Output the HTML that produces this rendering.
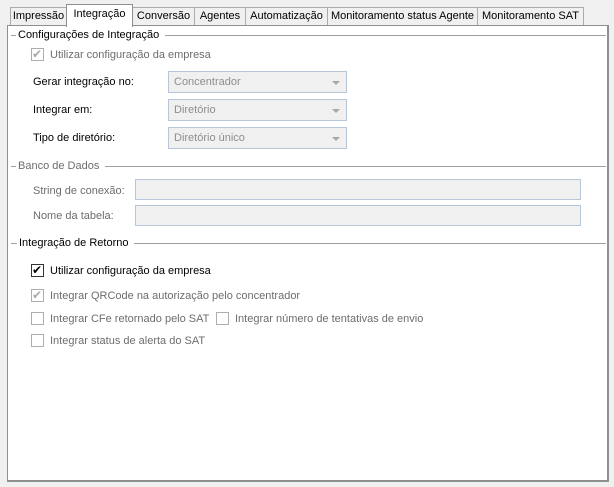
<!DOCTYPE html><html><head><style>
*{margin:0;padding:0;box-sizing:border-box}
body{width:614px;height:487px;background:#f0f0f0;position:relative;overflow:hidden;font-family:"Liberation Sans",sans-serif;font-size:11px;color:#000}
.tab{position:absolute;top:7px;height:19px;border:1px solid #acacac;border-bottom:none;background:#f0f0f0;text-align:center;line-height:17px;font-size:11px;white-space:nowrap;overflow:hidden}
.tab.sel{top:4px;height:23px;background:#fff;z-index:3;border-color:#8e8f8f;line-height:18px}
.panel{position:absolute;left:7px;top:25px;width:602px;height:457px;background:#fff;border:1px solid #8e8f8f;border-right-width:2px;border-bottom-width:2px;z-index:2}
.gl{position:absolute;height:1px;background:#a0a0a0;z-index:4}
.g{color:#6d6d6d}
.cb{position:absolute;width:13px;height:13px;border:1px solid #aeaeae;background:#fff;z-index:4}
.cb.on{border-color:#333}
.combo{position:absolute;left:168px;width:179px;height:22px;border:1px solid #b8c6da;background:#f0f0f0;z-index:4;color:#8e8e8e;padding-left:5px;line-height:20px}
.combo:after{content:"";position:absolute;right:6px;top:9px;border:4px solid transparent;border-top:4px solid #a8a8a8;border-bottom:none}
.inp{position:absolute;left:135px;width:446px;height:21px;border:1px solid #b8c6da;background:#f0f0f0;z-index:4}
.t{position:absolute;z-index:5;white-space:nowrap;line-height:14px}
.h{background:#fff;padding:0 6px 0 2px}
</style></head><body>
<div class="tab" style="left:10px;width:57px">Impressão</div>
<div class="tab sel" style="left:66px;width:67px">Integração</div>
<div class="tab" style="left:132px;width:63px">Conversão</div>
<div class="tab" style="left:194px;width:52px">Agentes</div>
<div class="tab" style="left:245px;width:83px">Automatização</div>
<div class="tab" style="left:327px;width:151px">Monitoramento status Agente</div>
<div class="tab" style="left:477px;width:107px">Monitoramento SAT</div>
<div class="panel"></div>

<div class="gl" style="left:11px;width:595px;top:35px"></div>
<div class="t h" style="left:16px;top:28px">Configurações de Integração</div>
<div class="cb" style="left:31px;top:48px"></div><div class="t" style="left:32px;top:47px;color:#aaa;font-size:12px">✔</div>
<div class="t g" style="left:50px;top:48px">Utilizar configuração da empresa</div>
<div class="t" style="left:33px;top:75px">Gerar integração no:</div>
<div class="combo" style="top:71px">Concentrador</div>
<div class="t" style="left:33px;top:103px">Integrar em:</div>
<div class="combo" style="top:99px">Diretório</div>
<div class="t" style="left:33px;top:131px">Tipo de diretório:</div>
<div class="combo" style="top:127px">Diretório único</div>

<div class="gl" style="left:11px;width:595px;top:166px"></div>
<div class="t g h" style="left:16px;top:159px">Banco de Dados</div>
<div class="t g" style="left:33px;top:184px">String de conexão:</div>
<div class="inp" style="top:179px"></div>
<div class="t g" style="left:33px;top:209px">Nome da tabela:</div>
<div class="inp" style="top:205px"></div>

<div class="gl" style="left:11px;width:595px;top:243px"></div>
<div class="t h" style="left:17px;top:236px">Integração de Retorno</div>
<div class="cb on" style="left:31px;top:264px"></div><div class="t" style="left:32px;top:263px;font-size:12px">✔</div>
<div class="t" style="left:50px;top:264px">Utilizar configuração da empresa</div>
<div class="cb" style="left:31px;top:289px"></div><div class="t" style="left:32px;top:288px;color:#aaa;font-size:12px">✔</div>
<div class="t g" style="left:50px;top:289px">Integrar QRCode na autorização pelo concentrador</div>
<div class="cb" style="left:31px;top:312px"></div>
<div class="t g" style="left:50px;top:312px">Integrar CFe retornado pelo SAT</div>
<div class="cb" style="left:216px;top:312px"></div>
<div class="t g" style="left:235px;top:312px">Integrar número de tentativas de envio</div>
<div class="cb" style="left:31px;top:334px"></div>
<div class="t g" style="left:50px;top:334px">Integrar status de alerta do SAT</div>
</body></html>
